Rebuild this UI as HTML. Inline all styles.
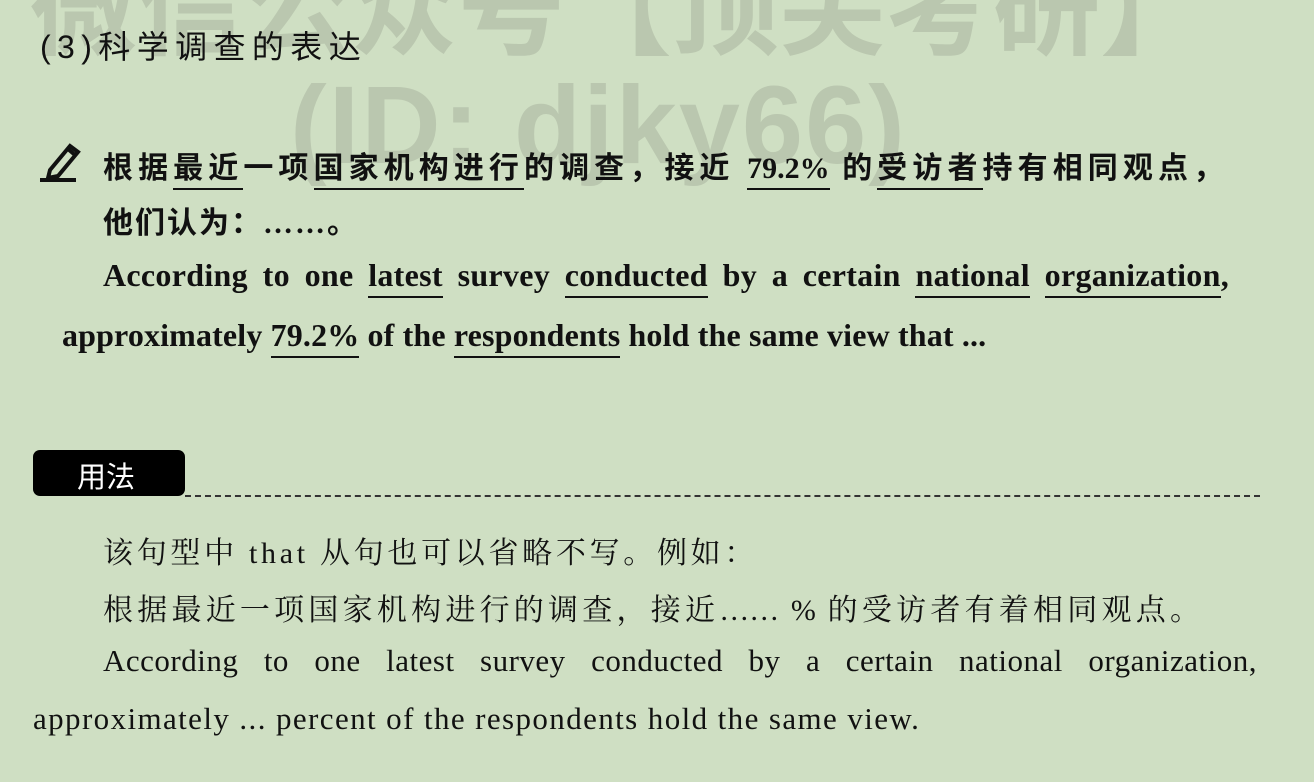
<!DOCTYPE html>
<html><head><meta charset="utf-8"><style>
body{margin:0;width:1314px;height:782px;background:#cfdfc3;position:relative;overflow:hidden;font-family:"Liberation Serif","Noto Serif CJK SC",serif;color:#111}
.a{position:absolute;white-space:nowrap}
.wm{position:absolute;color:#bac7af;font-family:"Liberation Sans","Noto Sans CJK SC",sans-serif;font-weight:bold;white-space:nowrap}
.j{text-align:justify;text-align-last:justify}
u{text-decoration:none;border-bottom:2px solid #111;padding-bottom:3px}
.b{font-weight:bold}
</style></head><body>
<div class="wm" style="left:30px;top:-78px;font-size:107px">微信公众号【顶尖考研】</div>
<div class="wm" style="left:290px;top:62px;font-size:110px;letter-spacing:2px">(ID: djky66)</div>

<div class="a" style="left:40px;top:22px;font-size:32px;letter-spacing:6.4px;font-family:'Liberation Sans','Noto Sans CJK SC',sans-serif">(3)科学调查的表达</div>

<svg class="a" style="left:40px;top:140px" width="42" height="42" viewBox="0 0 42 42"><path d="M10 30 L30 6 L38 12 L18 36 L8 38 Z" fill="none" stroke="#111" stroke-width="4"/><path d="M28 9 L35 15" stroke="#111" stroke-width="4"/><rect x="0" y="38" width="36" height="4" fill="#111"/></svg>

<div class="a b j" style="left:103px;top:143px;width:1120px;font-size:30px;font-family:'Liberation Serif','Noto Sans CJK SC',sans-serif">根据<u>最近</u>一项<u>国家机构进行</u>的调查，接近 <u>79.2%</u> 的<u>受访者</u>持有相同观点，</div>
<div class="a b" style="left:103px;top:198px;font-size:30px;letter-spacing:2px;font-family:'Liberation Serif','Noto Sans CJK SC',sans-serif">他们认为：……。</div>

<div class="a b j" style="left:103px;top:257px;width:1126px;font-size:32px;letter-spacing:0.3px">According to one <u>latest</u> survey <u>conducted</u> by a certain <u>national</u> <u>organization</u>,</div>
<div class="a b" style="left:62px;top:317px;font-size:32px;letter-spacing:0.15px">approximately <u>79.2%</u> of the <u>respondents</u> hold the same view that ...</div>

<div class="a" style="left:33px;top:450px;width:152px;height:46px;background:#000;border-radius:7px"></div>
<div class="a" style="left:77px;top:454px;font-size:29px;color:#fff;font-family:'Liberation Sans','Noto Sans CJK SC',sans-serif">用法</div>
<div class="a" style="left:185px;top:495px;width:1075px;border-top:2px dashed #333"></div>

<div class="a" style="left:103px;top:528px;font-size:30px;letter-spacing:3.7px">该句型中 that 从句也可以省略不写。例如：</div>
<div class="a j" style="left:103px;top:585px;width:1097px;font-size:30px">根据最近一项国家机构进行的调查，接近…… % 的受访者有着相同观点。</div>
<div class="a j" style="left:103px;top:643px;width:1154px;font-size:31px;letter-spacing:0.5px">According to one latest survey conducted by a certain national organization,</div>
<div class="a" style="left:33px;top:701px;font-size:31px;letter-spacing:1.4px">approximately ... percent of the respondents hold the same view.</div>
</body></html>
